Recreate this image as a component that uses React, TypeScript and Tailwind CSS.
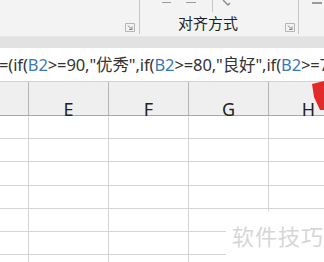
import React from "react";

const Launcher = () => (
  <svg width="10" height="9" viewBox="0 0 10 9" className="block">
    <path d="M0.5 0.5 H9.5 V8.5 H0.5 Z" fill="none" stroke="#b5b5b5" strokeWidth="1" />
    <path d="M3 2.5 L7 6.5 M7 3.5 V6.5 H4" fill="none" stroke="#8a8a8a" strokeWidth="1" />
  </svg>
);

export default function App() {
  const cols = [
    { w: 29, label: "" },
    { w: 80, label: "E" },
    { w: 80, label: "F" },
    { w: 80, label: "G" },
    { w: 80, label: "H" },
  ];
  const rows = [23, 23, 24, 23, 23, 23, 23];
  const font = { fontFamily: '"Noto Sans","Noto Sans CJK SC",sans-serif' };
  return (
    <div className="relative w-[324px] h-[262px] overflow-hidden bg-white" style={font}>
      {/* Ribbon */}
      <div className="h-[37px] bg-[#f3f3f3] flex border-b border-[#e6e6e6]">
        <div className="w-[139px] flex justify-end items-end pb-[4px] pr-[4px]">
          <Launcher />
        </div>
        <div className="w-px h-[34px] bg-[#c6c6c6]" />
        <div className="w-[158px] relative flex flex-col">
          <div className="h-[14px] flex items-start">
            <div className="ml-[22px] mt-0 w-[9px] h-[3px] border-b border-[#9a9a9a]" />
            <div className="ml-[15px] w-[10px] h-[3px] border-b border-[#9a9a9a]" />
            <div className="ml-[16px] w-px h-[12px] bg-[#c6c6c6]" />
            <svg width="10" height="7" className="ml-[9px]" viewBox="0 0 10 7">
              <path d="M1 0 L6 5 L8 3" fill="none" stroke="#8a8a8a" strokeWidth="1.4" />
            </svg>
          </div>
          <div className="flex items-end justify-between pl-[38px] pr-[3px] h-[19px]">
            <span className="text-[15px] leading-[19px] text-[#1f1f1f]">对齐方式</span>
            <div className="pb-[1px]">
              <Launcher />
            </div>
          </div>
        </div>
        <div className="w-px h-[34px] bg-[#c6c6c6]" />
        <div className="flex-1 flex justify-end items-start pr-[2px]">
          <div className="w-[10px] h-[4px] border-b-2 border-[#9a9a9a]" />
        </div>
      </div>
      <div className="h-[11px] bg-[#e2e2e2]" />
      {/* Formula bar */}
      <div className="h-[34px] bg-white border-b border-[#d2d2d2] flex items-center whitespace-nowrap overflow-hidden">
        <span className="text-[16.5px] leading-[22px] tracking-[-0.1px] text-[#333] -ml-[1px]">
          =(if(<span className="text-[#3c78b5]">B2</span>&gt;=90,"优秀",if(<span className="text-[#3c78b5]">B2</span>&gt;=80,"良好",if(<span className="text-[#3c78b5]">B2</span>&gt;=70
        </span>
      </div>
      {/* Column header */}
      <div className="h-[34px] bg-[#efefef] flex border-b border-[#a9a9a9]">
        {cols.map((c, i) => (
          <div
            key={i}
            className="shrink-0 h-full border-r border-[#b4b4b4] flex items-end justify-center"
            style={{ width: c.w }}
          >
            <span className="relative top-[3px] text-[18px] leading-[18px] text-[#222]">{c.label}</span>
          </div>
        ))}
      </div>
      {/* Grid */}
      {rows.map((h, r) => (
        <div key={r} className="flex border-b border-[#d4d4d4]" style={{ height: h }}>
          {cols.map((c, i) => (
            <div key={i} className="shrink-0 h-full border-r border-[#d4d4d4]" style={{ width: c.w }} />
          ))}
        </div>
      ))}
      {/* Watermark */}
      <div className="absolute left-[226px] top-[211px] w-[98px] h-[51px] bg-white flex items-center pl-[6px]">
        <span className="text-[22px] text-[#d6d6d6] tracking-[1px]">软件技巧</span>
      </div>
      {/* Red arrow */}
      <svg className="absolute left-[300px] top-[78px]" width="24" height="34" viewBox="0 0 24 34">
        <path d="M12 6 L24 3 L24 32 L20 32 L14 19 Z" fill="#e32a2a" />
      </svg>
    </div>
  );
}
